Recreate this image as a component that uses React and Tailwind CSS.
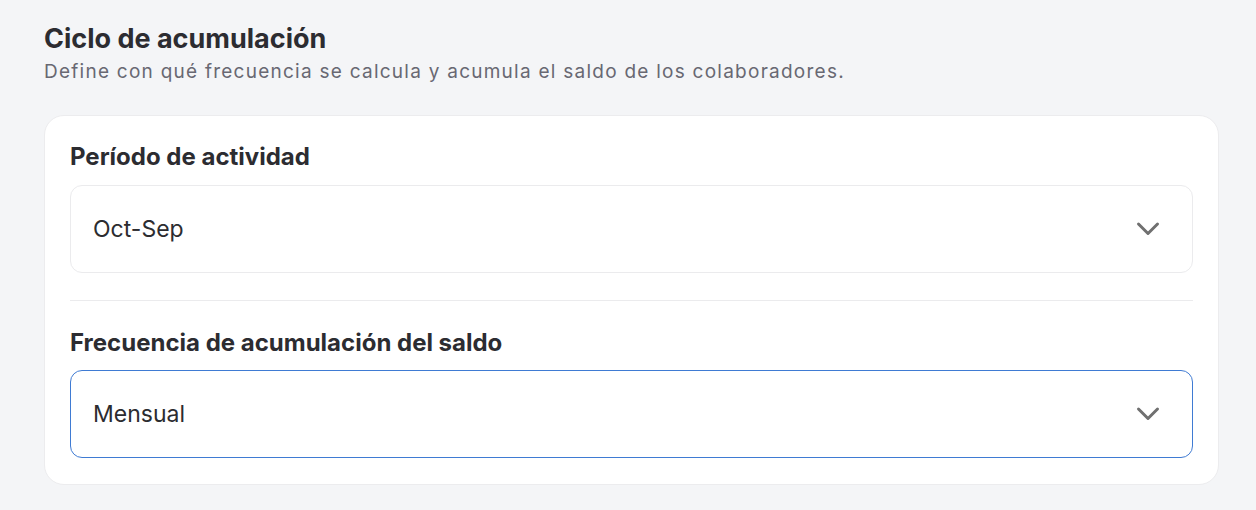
import { useState } from 'react';

function Chevron() {
  return (
    <svg width="24" height="16" viewBox="0 0 24 16" fill="none" className="shrink-0">
      <path d="M2.5 3 12 12.5 21.5 3" stroke="#707070" strokeWidth="3" strokeLinecap="round" strokeLinejoin="round" />
    </svg>
  );
}

function SelectBox({ value, active }) {
  return (
    <button
      type="button"
      className={`w-full h-[88px] flex items-center justify-between pl-[22px] pr-[32px] rounded-[12px] bg-white border text-left ${
        active ? 'border-[#3f7bd3]' : 'border-[#ebebed]'
      }`}
    >
      <span className="text-[23px] text-[#2c2c30]">{value}</span>
      <Chevron />
    </button>
  );
}

export default function App() {
  const [periodo] = useState('Oct-Sep');
  const [frecuencia] = useState('Mensual');

  return (
    <div className="min-h-[510px] bg-[#f4f5f7] px-[44px] pt-[21px] pb-[26px] font-['Inter',sans-serif]">
      <h1 className="text-[27px] leading-[36px] font-bold text-[#2c2c31]">Ciclo de acumulación</h1>
      <p className="mt-[2px] text-[19px] leading-[26px] tracking-[1.25px] text-[#686872]">
        Define con qué frecuencia se calcula y acumula el saldo de los colaboradores.
      </p>

      <div className="mt-[30px] w-[1175px] bg-white border border-[#ececee] rounded-[20px] px-[25px] pt-[26px] pb-[26px]">
        <label className="block text-[24px] leading-[30px] font-bold text-[#2c2c31]">Período de actividad</label>
        <div className="mt-[13px]">
          <SelectBox value={periodo} />
        </div>

        <div className="my-[27px] h-px bg-[#ebebed]" />

        <label className="block text-[24px] leading-[30px] font-bold text-[#2c2c31]">Frecuencia de acumulación del saldo</label>
        <div className="mt-[12px]">
          <SelectBox value={frecuencia} active />
        </div>
      </div>
    </div>
  );
}
